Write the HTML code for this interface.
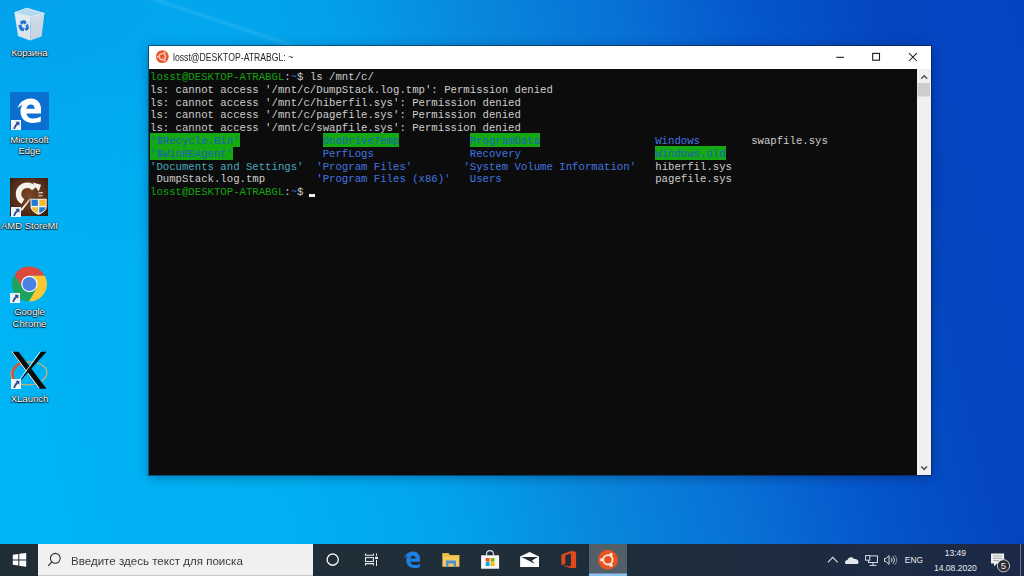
<!DOCTYPE html>
<html><head><meta charset="utf-8">
<style>
html,body{margin:0;padding:0;}
body{width:1024px;height:576px;overflow:hidden;position:relative;
 background:#0446bc;
 font-family:"Liberation Sans",sans-serif;}
.ico{position:absolute;}
.lbl{position:absolute;color:#fff;font-size:9.5px;text-align:center;line-height:11.9px;
 text-shadow:0 0 1px #000,0 1px 1px #000,0 0 2px rgba(0,0,0,0.7);width:59px;left:0;white-space:nowrap;}
#win{position:absolute;left:149px;top:46px;width:782px;height:429px;background:#fff;
 box-shadow:0 0 0 1px rgba(8,24,48,0.5),0 2px 11px rgba(0,10,40,0.38);}
#title{position:absolute;left:24px;top:4.8px;font-size:10px;color:#262626;white-space:pre;line-height:14px;transform-origin:0 0;transform:scaleX(0.865);}
#term{position:absolute;left:0;top:23px;width:768.3px;height:406px;background:#0c0c0c;overflow:hidden;}
#sb{position:absolute;left:768.3px;top:23px;width:13.7px;height:406px;background:#f0f0f0;}
pre{margin:0;position:absolute;left:1px;top:2.1px;font-family:"Liberation Mono",monospace;font-size:10.667px;line-height:12.8px;color:#cccccc;white-space:pre;}
.g{color:#16a014}
.b{color:#4474e0}
.c{color:#4aa8bc}
.ow{background:#14a812;color:#1a62b8;padding:1.6px 0 0.1px}
#tb{position:absolute;left:0;top:544px;width:1024px;height:32px;
 background:linear-gradient(90deg,#1f2d37 0px,#1f2e38 500px,#1d2b40 800px,#1b2948 1024px);}
</style></head><body>
<svg id="bgsvg" style="position:absolute;left:0;top:0" width="1024" height="576" viewBox="0 0 1024 576">
 <defs>
  <linearGradient id="bgg" gradientUnits="userSpaceOnUse" x1="0" y1="544" x2="1092.2" y2="282.9">
   <stop offset="0" stop-color="#00b4f5"/>
   <stop offset="0.13" stop-color="#00b2f4"/>
   <stop offset="0.26" stop-color="#00b0f2"/>
   <stop offset="0.39" stop-color="#02a4ec"/>
   <stop offset="0.52" stop-color="#0888dc"/>
   <stop offset="0.65" stop-color="#0870d6"/>
   <stop offset="0.762" stop-color="#0556cc"/>
   <stop offset="0.887" stop-color="#0444be"/>
   <stop offset="0.943" stop-color="#0546c6"/>
   <stop offset="1" stop-color="#0442c0"/>
  </linearGradient>
  <radialGradient id="tlg" gradientUnits="userSpaceOnUse" cx="0" cy="0" r="520" gradientTransform="translate(0,0) scale(1,0.55)">
   <stop offset="0" stop-color="#0a78d8" stop-opacity="0.3"/>
   <stop offset="0.5" stop-color="#0a78d8" stop-opacity="0.1"/>
   <stop offset="1" stop-color="#0a78d8" stop-opacity="0"/>
  </radialGradient>
 </defs>
 <rect width="1024" height="576" fill="url(#bgg)"/>
 <rect width="1024" height="576" fill="url(#tlg)"/>
 <filter id="blr" x="-20%" y="-50%" width="140%" height="200%"><feGaussianBlur stdDeviation="1.6"/></filter>
 <line x1="150" y1="-2" x2="330" y2="58" stroke="#bfe8ff" stroke-opacity="0.16" stroke-width="3" filter="url(#blr)"/>
</svg>

<!-- desktop icons -->
<svg class="ico" style="left:0;top:0" width="64" height="64" viewBox="0 0 64 64">
 <defs><linearGradient id="rbL" x1="0" y1="0" x2="0" y2="1"><stop offset="0" stop-color="#e2ecf2"/><stop offset="1" stop-color="#d8e2ea"/></linearGradient>
 <linearGradient id="rbR" x1="0" y1="0" x2="0" y2="1"><stop offset="0" stop-color="#ccdce8"/><stop offset="1" stop-color="#c6d4e0"/></linearGradient></defs>
 <polygon points="14.5,12.7 30.8,16.8 30.1,40.5 18,36" fill="url(#rbL)"/>
 <polygon points="30.8,16.8 44.4,13.4 41.6,36.6 30.1,40.5" fill="url(#rbR)"/>
 <polygon points="14.5,12.7 26.7,8.2 44.4,13.4 30.8,16.8" fill="#b4d8f0" stroke="#e6f0f6" stroke-width="0.9"/>
 <g fill="#1c74d0" stroke="#1c74d0" stroke-width="0.9" stroke-linejoin="round">
  <path d="M20.6,21.6 L24.6,20.4 L26.4,22.8 L24.2,24 L23.4,22.6 L21.6,24.4 Z"/>
  <path d="M27.6,24.4 L28.6,28.6 L26.4,30.6 L25,28.6 L26.8,28 L26,25.4 Z"/>
  <path d="M18.8,25.6 L20.8,25 L22.2,28 L24,28.4 L23.4,30.8 L20.4,30 Z"/>
 </g>
</svg>
<div class="lbl" style="top:46.8px">Корзина</div>

<svg class="ico" style="left:10px;top:92px" width="39" height="38" viewBox="0 0 39 38">
 <rect width="39" height="38" fill="#0b6fd2"/>
 <path fill="#fff" fill-rule="evenodd" d="M7.5,16.3 C9.5,9.5 15.5,6.2 21.3,6.4 C27.6,6.6 31,11.4 31,16.5 L31,21.4 L16.5,21.4 C17,24.6 19.6,26.6 23.2,26.6 C26,26.6 28.6,25.8 30.8,24.6 L30.8,29.6 C28.5,30.6 25.8,31 22.8,31 C14.8,31 10.5,26 10.5,19.5 C10.5,16.9 11.2,14.6 12.4,12.9 C10.2,13.6 8.6,14.8 7.5,16.3 Z M16.4,16.7 L24.8,16.7 C24.6,14.2 23,12.6 20.7,12.6 C18.6,12.6 16.9,14.2 16.4,16.7 Z"/>
</svg>
<div class="lbl" style="top:133.5px">Microsoft<br>Edge</div>

<svg class="ico" style="left:10.3px;top:178.3px" width="38.2" height="38.2" viewBox="0 0 38.2 38.2">
 <defs><radialGradient id="amdbg" cx="0.5" cy="0.45" r="0.75"><stop offset="0" stop-color="#7c4626"/><stop offset="0.55" stop-color="#58301a"/><stop offset="1" stop-color="#2a180c"/></radialGradient></defs>
 <rect width="38.2" height="38.2" fill="url(#amdbg)"/>
 <path d="M24.2,10.6 A8.8,8.8 0 1 0 12.95,23.7" fill="none" stroke="#f6f2ee" stroke-width="5.4"/>
 <polygon points="22.6,4.6 31,6.8 28.8,13.6" fill="#f6f2ee"/>
 <path d="M9.6,32.4 L20.6,19.6 L19.2,23.2 L12.4,32.6 Z" fill="#f2ece6"/>
 <path d="M28.3,15 L32.8,14.6 M28.3,18 L32.5,17.8" stroke="#efe8e0" stroke-width="1.1"/>
 <path d="M20.6,20.7 L36.7,20.7 L36.7,28.5 C36.7,32.5 32.5,35.3 28.6,36.8 C24.8,35.3 20.6,32.5 20.6,28.5 Z" fill="#f4f4f4"/>
 <path d="M21.6,21.7 L27.9,21.7 L27.9,27.9 L21.6,27.9 Z" fill="#1f7ad2"/>
 <path d="M29.3,21.7 L35.7,21.7 L35.7,27.9 L29.3,27.9 Z" fill="#f2bb2c"/>
 <path d="M21.6,29.3 L27.9,29.3 L27.9,35.3 C24.6,34 21.9,32 21.6,29.3 Z" fill="#f2bb2c"/>
 <path d="M29.3,29.3 L35.7,29.3 C35.4,32 32.6,34 29.3,35.3 Z" fill="#1f7ad2"/>
</svg>
<div class="lbl" style="top:219.9px">AMD StoreMI</div>

<svg class="ico" style="left:10px;top:265px" width="39" height="39" viewBox="0 0 39 39">
 <path d="M19.4,10.8 L34.75,10.8 A17.4,17.4 0 0 0 4.6,9.8 L12.3,23.1 Z" fill="#dd4a3c"/>
 <path d="M26.5,23.1 L18.8,36.4 A17.4,17.4 0 0 0 34.75,10.8 L19.4,10.8 Z" fill="#fbc834"/>
 <path d="M12.3,23.1 L4.6,9.8 A17.4,17.4 0 0 0 18.8,36.4 L26.5,23.1 Z" fill="#1ea25e"/>
 <circle cx="19.4" cy="19" r="8.2" fill="#fff"/>
 <circle cx="19.4" cy="19" r="7.1" fill="#4c82e4"/>
</svg>
<div class="lbl" style="top:306.3px">Google<br>Chrome</div>

<svg class="ico" style="left:8px;top:349px" width="42" height="44" viewBox="0 0 42 44">
 <ellipse cx="20.9" cy="24.5" rx="18" ry="11.4" fill="none" stroke="#e8b060" stroke-width="1.1" transform="rotate(-4 20.9 24.5)"/>
 <path d="M14.5,13.6 C9.5,15 5.5,19 4.4,24 C4,27 5.5,30 8,32" fill="none" stroke="#e2501c" stroke-width="2.2"/>
 <polygon points="3.35,2.7 10.6,2.7 38.5,39.8 31.6,39.8" fill="#0c0c0c"/>
 <line x1="3.6" y1="2.2" x2="31.2" y2="39.2" stroke="#f4f8fa" stroke-width="1"/>
 <polygon points="32.8,2.7 38.5,2.7 13.4,30.8 12.6,30.6" fill="#0c0c0c"/>
 <line x1="32.4" y1="2.5" x2="12.2" y2="30" stroke="#f4f8fa" stroke-width="0.9"/>
</svg>
<div class="lbl" style="top:392.9px">XLaunch</div>
<svg class="ico" style="left:10.5px;top:120.2px" width="10" height="10" viewBox="0 0 10 10"><rect width="10" height="10" fill="#eef4f8"/><path d="M4.4,1.7 L8.4,1.7 L8.4,5.7 L7.1,4.4 C5.6,5.6 4.6,7.2 4,8.9 L2.3,8.9 C2.7,6.5 4,4.6 5.7,3 Z" fill="#2a4c98"/></svg>
<svg class="ico" style="left:10.8px;top:206.5px" width="10" height="10" viewBox="0 0 10 10"><rect width="10" height="10" fill="#eef4f8"/><path d="M4.4,1.7 L8.4,1.7 L8.4,5.7 L7.1,4.4 C5.6,5.6 4.6,7.2 4,8.9 L2.3,8.9 C2.7,6.5 4,4.6 5.7,3 Z" fill="#2a4c98"/></svg>
<svg class="ico" style="left:10.4px;top:292.8px" width="10" height="10" viewBox="0 0 10 10"><rect width="10" height="10" fill="#eef4f8"/><path d="M4.4,1.7 L8.4,1.7 L8.4,5.7 L7.1,4.4 C5.6,5.6 4.6,7.2 4,8.9 L2.3,8.9 C2.7,6.5 4,4.6 5.7,3 Z" fill="#2a4c98"/></svg>
<svg class="ico" style="left:10.6px;top:378.5px" width="10" height="10" viewBox="0 0 10 10"><rect width="10" height="10" fill="#eef4f8"/><path d="M4.4,1.7 L8.4,1.7 L8.4,5.7 L7.1,4.4 C5.6,5.6 4.6,7.2 4,8.9 L2.3,8.9 C2.7,6.5 4,4.6 5.7,3 Z" fill="#2a4c98"/></svg>

<!-- window -->
<div id="win">
 <svg style="position:absolute;left:6px;top:4px" width="15" height="15" viewBox="0 0 15 15">
  <circle cx="7.3" cy="6.6" r="6.4" fill="#e65a2c"/>
  <circle cx="7.3" cy="6.6" r="3.1" fill="none" stroke="#fde4d8" stroke-width="1.2"/>
  <circle cx="2.9" cy="6.6" r="1.2" fill="#fde4d8" stroke="#e65a2c" stroke-width="0.5"/>
  <circle cx="9.5" cy="2.8" r="1.2" fill="#fde4d8" stroke="#e65a2c" stroke-width="0.5"/>
  <circle cx="9.5" cy="10.4" r="1.2" fill="#fde4d8" stroke="#e65a2c" stroke-width="0.5"/>
 </svg>
 <div id="title">losst@DESKTOP-ATRABGL: ~</div>
 <!-- controls -->
 <svg style="position:absolute;left:680px;top:0" width="102" height="23" viewBox="0 0 102 23">
  <line x1="7.2" y1="11.3" x2="15.1" y2="11.3" stroke="#1a1a1a" stroke-width="1.1"/>
  <rect x="43.7" y="7.4" width="6.8" height="6.8" fill="none" stroke="#1a1a1a" stroke-width="1.1"/>
  <line x1="80" y1="7.2" x2="87.8" y2="15" stroke="#1a1a1a" stroke-width="1.05"/>
  <line x1="87.8" y1="7.2" x2="80" y2="15" stroke="#1a1a1a" stroke-width="1.05"/>
 </svg>
 <div id="term"><pre><span class="g">losst@DESKTOP-ATRABGL</span>:<span class="b">~</span>$ ls /mnt/c/
ls: cannot access '/mnt/c/DumpStack.log.tmp': Permission denied
ls: cannot access '/mnt/c/hiberfil.sys': Permission denied
ls: cannot access '/mnt/c/pagefile.sys': Permission denied
ls: cannot access '/mnt/c/swapfile.sys': Permission denied
<span class="ow">'$Recycle.Bin'</span>             <span class="ow">OneDriveTemp</span>           <span class="ow">ProgramData</span>                  <span class="b">Windows</span>        swapfile.sys
<span class="ow">'$WinREAgent'</span>              <span class="b">PerfLogs</span>               <span class="b">Recovery</span>                     <span class="ow">Windows.old</span>
<span class="c">'Documents and Settings'</span>  <span class="b">'Program Files'</span>        <span class="b">'System Volume Information'</span>   hiberfil.sys
 DumpStack.log.tmp        <span class="b">'Program Files (x86)'</span>   <span class="b">Users</span>                        pagefile.sys
<span class="g">losst@DESKTOP-ATRABGL</span>:<span class="b">~</span>$ </pre>
  <div style="position:absolute;left:160px;top:125.2px;width:6.4px;height:3px;background:#f0f0f0"></div>
 </div>
 <div id="sb">
  <svg width="14" height="405" style="position:absolute;left:0;top:0">
   <polyline points="4.2,9.8 7.2,6.8 10.2,9.8" fill="none" stroke="#505050" stroke-width="1.5"/>
   <rect x="0.5" y="14" width="12.5" height="13.5" fill="#cdcdcd"/>
   <polyline points="4.2,397.5 7.1,400.4 10,397.5" fill="none" stroke="#505050" stroke-width="1.5"/>
  </svg>
 </div>
</div>

<!-- taskbar -->
<div id="tb">
 <svg style="position:absolute;left:0;top:0" width="1024" height="32" viewBox="0 544 1024 32">
  <!-- windows logo -->
  <g fill="#fff">
   <polygon points="12.8,554.7 18.3,553.9 18.3,559.4 12.8,559.4"/>
   <polygon points="19.3,553.8 26.2,552.9 26.2,559.4 19.3,559.4"/>
   <polygon points="12.8,560.4 18.3,560.4 18.3,565.6 12.8,564.8"/>
   <polygon points="19.3,560.4 26.2,560.4 26.2,566.8 19.3,565.8"/>
  </g>
  <!-- search box -->
  <rect x="38" y="544" width="275" height="32" fill="#f0f0f0"/>
  <rect x="38" y="575" width="275" height="1" fill="#c8c8c8"/>
  <circle cx="55.3" cy="558.3" r="4.9" fill="none" stroke="#2e2e2e" stroke-width="1.1"/>
  <line x1="51.8" y1="561.9" x2="48.2" y2="565.9" stroke="#2e2e2e" stroke-width="1.2"/>
  <!-- cortana -->
  <circle cx="332.7" cy="559.6" r="5.6" fill="none" stroke="#f0f0f0" stroke-width="1.4"/>
  <!-- task view -->
  <g stroke="#e8ecee" stroke-width="1.05" fill="none">
   <path d="M365.5,553.4 L365.5,555.3 L373.4,555.3 L373.4,553.4"/>
   <rect x="365.5" y="557.6" width="7.9" height="3.9"/>
   <path d="M365.5,565.6 L365.5,563.6 L373.4,563.6 L373.4,565.6"/>
   <line x1="376.5" y1="553.4" x2="376.5" y2="555.8"/>
   <line x1="376.5" y1="560" x2="376.5" y2="566"/>
  </g>
  <rect x="375.1" y="556.8" width="2.8" height="2.2" fill="#f4f6f8"/>
  <!-- edge -->
  <path fill="#1e80de" fill-rule="evenodd" transform="translate(399.2,547.3) scale(0.67)" d="M7.5,16.3 C9.5,9.5 15.5,6.2 21.3,6.4 C27.6,6.6 31,11.4 31,16.5 L31,21.4 L16.5,21.4 C17,24.6 19.6,26.6 23.2,26.6 C26,26.6 28.6,25.8 30.8,24.6 L30.8,29.6 C28.5,30.6 25.8,31 22.8,31 C14.8,31 10.5,26 10.5,19.5 C10.5,16.9 11.2,14.6 12.4,12.9 C10.2,13.6 8.6,14.8 7.5,16.3 Z M16.4,16.7 L24.8,16.7 C24.6,14.2 23,12.6 20.7,12.6 C18.6,12.6 16.9,14.2 16.4,16.7 Z"/>
  <!-- explorer -->
  <path d="M442.4,553.6 L448.6,553.6 L450,555 L459.4,555 L459.4,566.8 L442.4,566.8 Z" fill="#f4c85a"/>
  <rect x="442.4" y="553" width="6.4" height="1.2" fill="#e2a93a"/>
  <rect x="442.4" y="555.2" width="17" height="1.1" fill="#e6b040"/>
  <path d="M446,566.8 L446,560.6 L456,560.6 L456,566.8 L453.6,566.8 L453.6,563.6 L448.4,563.6 L448.4,566.8 Z" fill="#4a90d6"/>
  <!-- store -->
  <path d="M486.6,555.6 L486.6,554 A3.4,3.4 0 0 1 493.4,554 L493.4,555.6" fill="none" stroke="#e4e6e8" stroke-width="1.1"/>
  <rect x="481.1" y="555.3" width="18" height="13.5" rx="0.6" fill="#f6f6f6"/>
  <rect x="485.7" y="558" width="3.9" height="3.7" fill="#f25022"/>
  <rect x="490.6" y="558" width="3.9" height="3.7" fill="#7fba00"/>
  <rect x="485.7" y="562.2" width="3.9" height="3.8" fill="#00a4ef"/>
  <rect x="490.6" y="562.2" width="3.9" height="3.8" fill="#ffb900"/>
  <!-- mail -->
  <path d="M520.1,556.4 L529.6,551.9 L539,556.4 L539,567 L520.1,567 Z" fill="#fafafa"/>
  <path d="M521.4,557.1 L537.7,557.1 L532,560.4 L534.6,563.9 L529.5,561 Z" fill="#1f2d37"/>
  <!-- office -->
  <path d="M561.4,554.4 L570.9,551 L576.1,551.7 L576.1,567.7 L570.9,568.3 L561.4,565 L570.9,566.3 L570.9,553.4 L565.3,555.3 L565.3,563.8 L561.4,565 Z" fill="#e34a1a"/>
  <!-- ubuntu active -->
  <rect x="589" y="544" width="38" height="32" fill="#525e68"/>
  <rect x="589" y="573.5" width="38" height="2.5" fill="#8cc2ee"/>
  <circle cx="607.9" cy="559.8" r="10" fill="#e9531f"/>
  <g>
   <circle cx="607.9" cy="559.8" r="4.7" fill="none" stroke="#fbe6da" stroke-width="1.8"/>
   <circle cx="601.7" cy="559.8" r="1.7" fill="#fbe6da"/>
   <circle cx="611" cy="554.4" r="1.7" fill="#fbe6da"/>
   <circle cx="611" cy="565.2" r="1.7" fill="#fbe6da"/>
  </g>
  <!-- tray -->
  <polyline points="827.9,562.4 832.75,557.4 837.7,562.4" fill="none" stroke="#dde0e4" stroke-width="1.1"/>
  <path d="M846,564 C844.5,564 844.5,560 847.5,560 C848,557 852.5,556 854,559 C856.5,558.5 859,560.5 858.5,562.5 C858.3,563.5 857.8,564 857,564 Z" fill="#e4e8ec"/>
  <g stroke="#d8dce0" stroke-width="1" fill="none">
   <rect x="868.5" y="555.9" width="9" height="6.6"/>
   <line x1="873" y1="562.5" x2="873" y2="565.2"/>
   <line x1="869.5" y1="565.4" x2="876.5" y2="565.4"/>
   <rect x="865.6" y="555.6" width="4.2" height="4.6" fill="#1c2840"/>
  </g>
  <g stroke="#d8dce0" stroke-width="1" fill="none">
   <path d="M884.5,558.4 L886.3,558.4 L889,555.5 L889,564.5 L886.3,561.6 L884.5,561.6 Z"/>
   <path d="M891,557.8 A3,3 0 0 1 891,562.2"/>
   <path d="M892.8,556.4 A5,5 0 0 1 892.8,563.6"/>
   <path d="M894.6,555 A7,7 0 0 1 894.6,565" stroke="#8890a0"/>
  </g>
  <text x="904.8" y="563.1" font-family="Liberation Sans" font-size="9.4" fill="#e8eaee" textLength="18.2" lengthAdjust="spacingAndGlyphs">ENG</text>
  <text x="944.8" y="556" font-family="Liberation Sans" font-size="9.3" fill="#e8eaee" textLength="21.2" lengthAdjust="spacingAndGlyphs">13:49</text>
  <text x="933.9" y="570.5" font-family="Liberation Sans" font-size="9.8" fill="#e8eaee" textLength="43" lengthAdjust="spacingAndGlyphs">14.08.2020</text>
  <path d="M991,553.4 L1004.1,553.4 L1004.1,563.4 L997,563.4 L994,566.4 L994,563.4 L991,563.4 Z" fill="#f0f0f0"/>
  <g stroke="#9aa0a8" stroke-width="0.9"><line x1="993" y1="556" x2="1002" y2="556"/><line x1="993" y1="558.3" x2="1002" y2="558.3"/><line x1="993" y1="560.6" x2="999" y2="560.6"/></g>
  <circle cx="1003.5" cy="565.8" r="6.1" fill="#2a2e34" stroke="#c8ccd0" stroke-width="1"/>
  <text x="1003.5" y="569.4" font-family="Liberation Sans" font-size="9.5" fill="#f0f0f0" text-anchor="middle">5</text>
  <rect x="1020" y="544" width="1" height="32" fill="#6c7888"/>
 </svg>
 <div style="position:absolute;left:70.6px;top:9px;font-size:11.8px;color:#3a3a3a;white-space:pre;line-height:16px;transform-origin:0 0;transform:scaleX(0.98)">Введите здесь текст для поиска</div>
</div>
</body></html>
